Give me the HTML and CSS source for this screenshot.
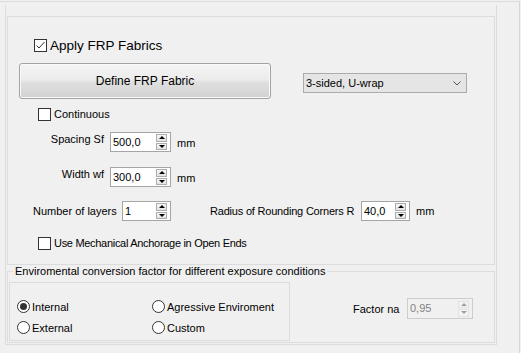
FILE: index.html
```html
<!DOCTYPE html>
<html lang="en">
<head>
    <meta charset="UTF-8">
    <title>FRP Fabrics</title>
    <link rel="stylesheet" href="styles.css">
</head>
<body>
<div class="frame">
    <div class="panel">
        <div class="box">
            <label class="check big row-apply">
                <span class="cb"><svg width="11" height="11" viewBox="0 0 11 11"><polyline points="1.5,5.5 4,8 9.5,2" fill="none" stroke="#333" stroke-width="1"/></svg></span>
                Apply FRP Fabrics
            </label>

            <div class="row-define">
                <button class="btn">Define FRP Fabric</button>
                <div class="combo">
                    <span>3-sided, U-wrap</span>
                    <svg class="chev" width="8" height="5" viewBox="0 0 8 5"><polyline points="0.5,0.5 4,4 7.5,0.5" fill="none" stroke="#555" stroke-width="1"/></svg>
                </div>
            </div>

            <label class="check row-cont"><span class="cb"></span>Continuous</label>

            <div class="field row-spacing">
                <span class="lbl">Spacing Sf</span>
                <div class="spin w61">
                    <span class="val">500,0</span>
                    <span class="arrows"><i class="up"></i><i class="down"></i></span>
                </div>
                <span class="unit">mm</span>
            </div>

            <div class="field row-width">
                <span class="lbl">Width wf</span>
                <div class="spin w61">
                    <span class="val">300,0</span>
                    <span class="arrows"><i class="up"></i><i class="down"></i></span>
                </div>
                <span class="unit">mm</span>
            </div>

            <div class="row-layers">
                <span class="lbl-n">Number of layers</span>
                <div class="spin w49">
                    <span class="val">1</span>
                    <span class="arrows"><i class="up"></i><i class="down"></i></span>
                </div>
                <span class="lbl-r">Radius of Rounding Corners R</span>
                <div class="spin w49">
                    <span class="val">40,0</span>
                    <span class="arrows"><i class="up"></i><i class="down"></i></span>
                </div>
                <span class="unit-r">mm</span>
            </div>

            <label class="check row-anch"><span class="cb"></span>Use Mechanical Anchorage in Open Ends</label>
        </div>

        <fieldset class="env">
            <legend>Enviromental conversion factor for different exposure conditions</legend>
            <div class="env-row">
                <div class="radios">
                    <label class="radio"><span class="rb on"></span>Internal</label>
                    <label class="radio"><span class="rb"></span>Agressive Enviroment</label>
                    <label class="radio"><span class="rb"></span>External</label>
                    <label class="radio"><span class="rb"></span>Custom</label>
                </div>
                <div class="factor">
                    <span class="lbl-f">Factor na</span>
                    <div class="spin off">
                        <span class="val">0,95</span>
                        <span class="arrows"><i class="up"></i><i class="down"></i></span>
                    </div>
                </div>
            </div>
        </fieldset>
    </div>
</div>
</body>
</html>
```

FILE: styles.css
```css
*{
    margin: 0;
    padding: 0;
    box-sizing: border-box;
}
body{
    background: #f0f0f0;
    font-family: "Liberation Sans", Arial, sans-serif;
    font-size: 11px;
    color: #000;
}
.frame{
    width: 520px;
    height: 352px;
    margin-top: 1px;
    padding-top: 3px;
    border-top: 1px solid #dcdcdc;
    border-right: 1px solid #d6d6d6;
}
.panel{
    width: 492px;
    margin-left: 5px;
    padding: 11px 1px 1px;
    border: 1px solid #dcdcdc;
    border-top: 0;
}
.box{
    height: 249px;
    border: 1px solid #dcdcdc;
}

/* checkboxes */
.check{
    display: flex;
    align-items: center;
    gap: 3px;
    height: 13px;
    line-height: 13px;
    white-space: nowrap;
}
.cb{
    width: 13px;
    height: 13px;
    flex: none;
    border: 1px solid #333;
    background: #fff;
    display: flex;
    align-items: center;
    justify-content: center;
}
.big{
    font-size: 13.5px;
}
.row-apply{
    margin: 22px 0 0 26px;
}
.row-cont{
    margin: 9px 0 0 30px;
}
.row-anch{
    margin: 16px 0 0 30px;
    letter-spacing: -0.3px;
}

/* button + combo */
.row-define{
    display: flex;
    align-items: flex-start;
    margin: 11px 0 0 11px;
}
.btn{
    width: 252px;
    height: 36px;
    border: 1px solid #a3a3a3;
    border-radius: 3px;
    background: linear-gradient(#f4f4f4 0%, #ececec 45%, #dfdfdf 55%, #d2d2d2 100%);
    box-shadow: inset 0 0 0 1px #fafafa;
    font-family: "Liberation Sans", Arial, sans-serif;
    font-size: 12px;
    color: #000;
}
.combo{
    width: 164px;
    height: 20px;
    margin: 10px 0 0 32px;
    padding: 0 5px 0 2px;
    border: 1px solid #acacac;
    background: #e5e5e5;
    display: flex;
    align-items: center;
    justify-content: space-between;
}

/* spin boxes */
.field{
    display: flex;
    align-items: flex-start;
    height: 20px;
}
.row-spacing{
    margin-top: 11px;
}
.row-width{
    margin-top: 15px;
}
.lbl{
    width: 102px;
    padding-right: 6px;
    text-align: right;
    line-height: 13px;
    margin-top: 1px;
}
.unit{
    margin: 5px 0 0 6px;
    line-height: 13px;
}
.spin{
    height: 20px;
    display: flex;
    align-items: center;
    padding: 0 3px 0 2px;
    border: 1px solid #a5a5a5;
    background: #fff;
}
.w61{
    width: 61px;
}
.w49{
    width: 49px;
}
.val{
    flex: 1;
    line-height: 13px;
}
.arrows{
    width: 11px;
    height: 16px;
    display: flex;
    flex-direction: column;
    gap: 1px;
}
.arrows i{
    flex: 1;
    border: 1px solid #adadad;
    background: linear-gradient(#f6f6f6, #e3e3e3);
    display: flex;
    align-items: center;
    justify-content: center;
}
.arrows i::before{
    content: "";
    border-left: 3px solid transparent;
    border-right: 3px solid transparent;
}
.arrows .up::before{
    border-bottom: 3px solid #000;
}
.arrows .down::before{
    border-top: 3px solid #000;
}

.row-layers{
    display: flex;
    align-items: center;
    height: 20px;
    margin: 14px 0 0 25px;
    white-space: nowrap;
}
.lbl-n{
    width: 89px;
}
.lbl-r{
    width: 151px;
    margin-left: 39px;
    letter-spacing: -0.2px;
}
.unit-r{
    margin-left: 6px;
}

/* environment group */
.env{
    border: 1px solid #dcdcdc;
    padding: 0 0 1px;
    min-width: 0;
}
.env legend{
    margin-left: 5px;
    padding: 0 2px;
    line-height: 13px;
}
.env-row{
    display: flex;
    align-items: flex-start;
}
.radios{
    width: 281px;
    height: 59px;
    margin: 4px 0 0 1px;
    padding: 13px 0 0 7px;
    border: 1px solid #dcdcdc;
    display: grid;
    grid-template-columns: 135px auto;
    grid-auto-rows: 21px;
}
.radio{
    display: flex;
    align-items: center;
    gap: 2px;
    white-space: nowrap;
}
.rb{
    width: 13px;
    height: 13px;
    flex: none;
    border: 1px solid #333;
    border-radius: 50%;
    background: #fff;
    display: flex;
    align-items: center;
    justify-content: center;
}
.rb.on::before{
    content: "";
    width: 7px;
    height: 7px;
    border-radius: 50%;
    background: #333;
}
.factor{
    display: flex;
    align-items: center;
    margin: 20px 0 0 63px;
}
.lbl-f{
    width: 54px;
}
.spin.off{
    width: 66px;
    height: 21px;
    border-color: #cccccc;
    background: #f0f0f0;
    color: #838383;
}
.spin.off .arrows i{
    border-color: #e2e2e2;
    background: #f3f3f3;
}
.spin.off .up::before{
    border-bottom-color: #a0a0a0;
}
.spin.off .down::before{
    border-top-color: #a0a0a0;
}
```
